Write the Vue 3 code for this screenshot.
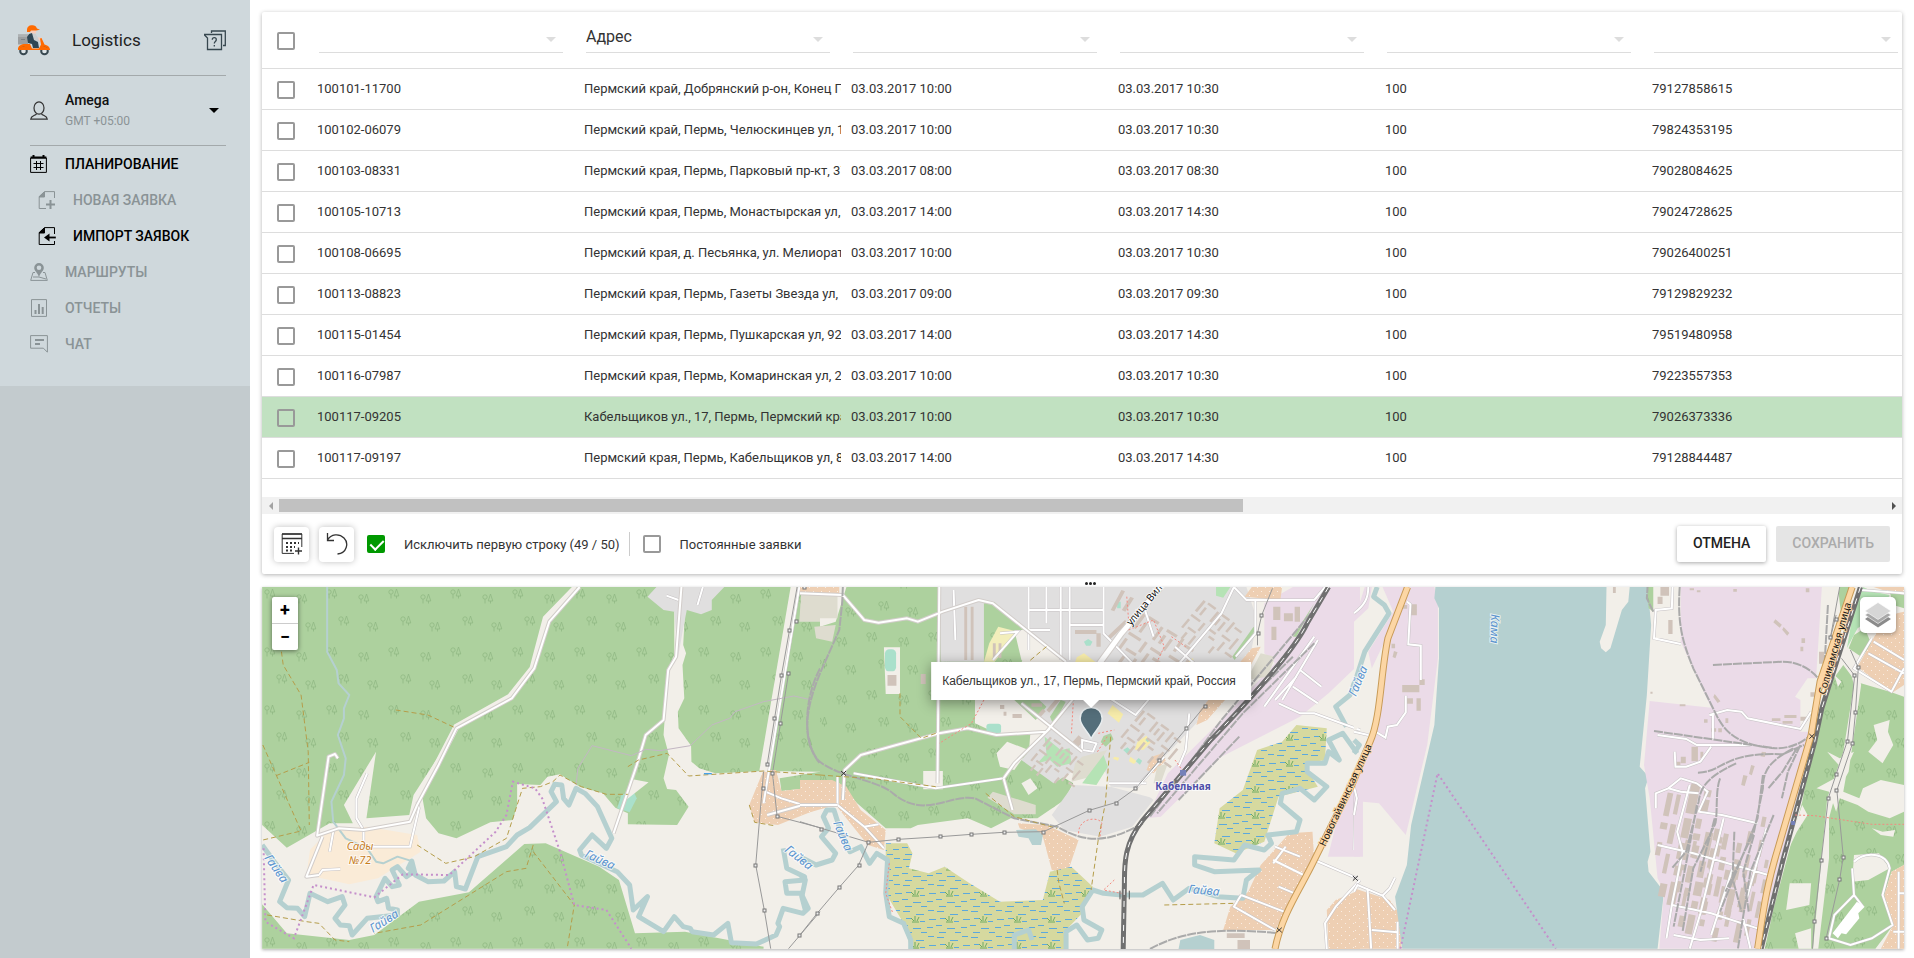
<script setup>
import { ref } from 'vue'

const rows = ref([
  ['100101-11700', 'Пермский край, Добрянский р-он, Конец Гор', '03.03.2017 10:00', '03.03.2017 10:30', '100', '79127858615'],
  ['100102-06079', 'Пермский край, Пермь, Челюскинцев ул, 12', '03.03.2017 10:00', '03.03.2017 10:30', '100', '79824353195'],
  ['100103-08331', 'Пермский края, Пермь, Парковый пр-кт, 37', '03.03.2017 08:00', '03.03.2017 08:30', '100', '79028084625'],
  ['100105-10713', 'Пермский края, Пермь, Монастырская ул, 14', '03.03.2017 14:00', '03.03.2017 14:30', '100', '79024728625'],
  ['100108-06695', 'Пермский края, д. Песьянка, ул. Мелиорат', '03.03.2017 10:00', '03.03.2017 10:30', '100', '79026400251'],
  ['100113-08823', 'Пермский края, Пермь, Газеты Звезда ул,', '03.03.2017 09:00', '03.03.2017 09:30', '100', '79129829232'],
  ['100115-01454', 'Пермский края, Пермь, Пушкарская ул, 92', '03.03.2017 14:00', '03.03.2017 14:30', '100', '79519480958'],
  ['100116-07987', 'Пермский края, Пермь, Комаринская ул, 2', '03.03.2017 10:00', '03.03.2017 10:30', '100', '79223557353'],
  ['100117-09205', 'Кабельщиков ул., 17, Пермь, Пермский кра', '03.03.2017 10:00', '03.03.2017 10:30', '100', '79026373336'],
  ['100117-09197', 'Пермский края, Пермь, Кабельщиков ул, 85', '03.03.2017 14:00', '03.03.2017 14:30', '100', '79128844487']
])
const selected = ref(8)
const skipFirst = ref(true)
const permanent = ref(false)
const columns = ref(['', 'Адрес', '', '', '', ''])

const box = ([x, y, w, h]) => `M${x} ${y}h${w}v${h}h${-w}z`
const eastBlocks = [
  [0, 0, 26, 90], [40, 10, 20, 22], [40, 40, 20, 40], [0, 105, 22, 60], [34, 100, 16, 30], [34, 145, 20, 20],
  [0, 180, 28, 50], [44, 180, 14, 40], [2, 250, 22, 30], [38, 244, 18, 48], [0, 300, 24, 70], [42, 310, 16, 24],
  [-60, 40, 16, 70], [-34, 40, 12, 60], [-62, 130, 20, 20], [-34, 130, 16, 60], [-60, 190, 14, 40],
  [-30, 220, 12, 60], [-28, 310, 20, 40], [90, 120, 18, 36], [118, 130, 14, 48], [90, 180, 16, 60],
  [122, 200, 16, 40], [90, 270, 22, 30], [124, 260, 14, 60], [92, 330, 18, 50], [160, 150, 14, 30],
  [184, 110, 14, 40], [162, 200, 20, 60], [192, 180, 12, 70], [164, 290, 18, 80], [196, 280, 14, 60],
  [214, 60, 12, 30], [220, 130, 12, 50], [218, 210, 12, 60]
].map(box).join('')
const townBlocks = [
  [0, 0, 10, 50], [20, -4, 34, 9], [20, 18, 9, 34], [64, 4, 9, 46], [0, 66, 40, 9], [52, 66, 9, 36], [0, 88, 9, 40],
  [84, 0, 34, 9], [84, 20, 9, 30], [106, 20, 9, 40], [76, 70, 36, 9], [76, 92, 9, 40], [98, 92, 24, 9],
  [132, 0, 9, 46], [150, 10, 30, 9], [132, 60, 36, 9], [150, 80, 9, 40], [132, 116, 9, 30], [180, 40, 9, 50],
  [20, 110, 34, 9], [24, 132, 9, 30], [56, 124, 9, 40], [180, 104, 30, 9]
].map(box).join('')
const masts = [
  [804, 587], [796, 621], [789, 630], [781, 675], [788, 673], [774, 718], [780, 723], [767, 764], [772, 773],
  [763, 788], [777, 816], [755, 865], [764, 910], [799, 935], [817, 913], [821, 829], [868, 842], [898, 839], [940, 836],
  [971, 834], [1004, 832], [1043, 832], [1089, 810], [1116, 803], [1135, 788], [1159, 760], [1186, 728], [1205, 706],
  [1258, 633], [1261, 615], [859, 865], [839, 887], [1830, 637], [1836, 619], [1858, 667], [1854, 675], [1855, 712],
  [1847, 741], [1852, 743], [1836, 774], [1836, 790], [1828, 798], [1821, 860], [1843, 857], [1839, 879], [1814, 921], [1826, 938]
]
const waters = [
  [264, 858, 55, 'Гайва'], [373, 933, -33, 'Гайва'], [584, 857, 24, 'Гайва'], [784, 851, 38, 'Гайва'],
  [833, 823, 67, 'Гайва'], [1188, 893, 5, 'Гайва'], [1356, 697, -68, 'Гайва'], [1491, 614, 91, 'Кама']
]
const lanesWest = 'M290 735V785H420L445 670 440 650M300 565L270 640V700L290 735M205 740L195 800M165 870L175 855 225 852M1520 660L1460 640 1415 620M1520 660H1568M1240 6L1225 60M1138 32L1172 45'
const lanesTown = 'M970 640H865M1330 830L1400 860M1325 870L1410 915M1360 830L1325 880M1235 975L1355 1025M1235 975L1215 1010 1330 1080M1340 950L1385 970M1440 870L1560 925M1568 930L1500 1010 1470 1060 1475 1137M1555 640L1552 840M1340 400L1400 430 1440 430 1568 480M1380 350L1450 400M1400 300L1460 350M1330 390L1390 320M1440 200L1300 410M1450 210L1350 390M640 51V240M730 51V270M690 51V160M755 51V270M640 120H850M640 180H700M755 165H850M560 190L610 185 540 270M430 60L435 210M940 655L1020 560M1090 430L1080 540 1060 590M850 51V190L940 290M860 380L940 435 1180 130 1215 51 1250 90H1440L1470 51M1275 90L1275 190 1220 260M1050 230L1180 350M960 100L990 200M150 610L380 655 570 625M105 620V705L180 770 235 835M180 770L220 763M790 510L830 520 820 545 790 540z'
const lanesEast = 'M0 920L10 900 80 932 100 910 115 878M38 910L48 1091M80 932L115 975M122 1010V1091M50 1035L122 1042M148 50L158 58 152 178 187 182V285M145 332V382L120 420 95 425 88 458 60 440M0 85C30 60 40 40 40 6M0 440L40 450M892 6L890 70 845 75 840 160 915 177M995 390L1045 375 1085 380 1102 400 1250 432 1280 380M1005 385V465M850 450L930 462 960 480 1110 480M845 670V625L880 610 915 580 960 595 990 620 965 680 1030 690 1130 715M880 610L915 620 965 625M898 500L900 545 930 545 970 530 1000 485M850 780L950 805 1160 870M890 960L1000 985 1130 1030M940 600L905 740 920 800 890 960 875 1060M1035 700L970 985 940 1091M1060 850L1000 1050M1155 730L1100 940M895 1050L970 1065 1050 1060M1090 1000L1110 1091M1450 160L1400 250 1505 320 1540 250M1440 205L1540 265M1455 170L1540 225M1420 15L1540 25M1525 860V1091M1510 1040H1541M1400 830C1430 800 1490 800 1500 850L1480 930 1508 1020 1450 1060 1390 1080 1330 1060 1345 990 1400 930 1425 965M1400 930L1395 850M1525 925H1541M0 605L8 640 0 690'
const roadsWest = 'M895 6L810 110 768 250 705 340 550 430 500 540 440 660 420 710 290 735 220 730 160 752 192 515 210 507 218 520M175 755L130 875 165 870M1180 6L1165 215 1143 255 1130 405 1080 450 1055 540 990 745M1420 690L1520 660'
const roadsTown = 'M0 70L120 75 180 150 220 158 300 145 330 155 400 125 500 90 540 100 745 275M120 690L125 600 170 555 270 525 390 490 470 475 550 495 690 485 850 275M620 400L790 545M390 51L385 640M570 625L600 580 700 475M570 625L595 720M0 705H105'
</script>

<template>
  <div class="app">
    <aside class="side">
      <div class="side-top">
        <header class="brand">
          <svg class="scooter" viewBox="0 0 32 31" width="32" height="31" aria-hidden="true">
            <path d="M0 9.500h10v10H0z" fill="#9c9fa1" /><path d="M0 9.500h10V12H0z" fill="#adb1b3" /><path d="M3 14h4v1H3z" fill="#7c8184" />
            <path d="M12 9l5-1 3 5 3 1v3l-5-1-4 2z" fill="#c9ced1" />
            <path d="M20 12l3 1 1-1v3l-3 1z" fill="#f6cdbd" />
            <path d="M12 4h6.500l-.5 4.500h-5z" fill="#f6cdbd" />
            <path d="M9 5C9 .5 13-.5 16 .5c2 .6 2.500 2 3 3l3 1.200-4 .8h-5l-1 1.500H9z" fill="#ff6a00" />
            <path d="M11 9l3-1 2 7 4 2 1 6h-6l-1-4-4-1-1-6z" fill="#2f4654" />
            <path d="M0 25c-.5-4 3-6 7-6h5l2 4.500h7l2-4-1-6 1.500-.5 3 6.500c4 1 5.500 3 5.500 5.500z" fill="#ff6a00" />
            <circle cx="5.500" cy="26" r="4.300" fill="#37474f" /><circle cx="26.500" cy="26" r="4.300" fill="#37474f" />
            <circle cx="5.500" cy="26" r="2.300" fill="#dfe5e8" /><circle cx="26.500" cy="26" r="2.300" fill="#dfe5e8" />
            <path d="M0 25c1-4.500 10-4.500 12 0zM20 25c1-4.500 10-4.500 12 0z" fill="#ff6a00" />
          </svg>
          <span class="brand-name">Logistics</span>
          <button class="plain" type="button" aria-label="Справка">
            <svg viewBox="0 0 22 21" width="22" height="21" fill="none" stroke="#37474f" stroke-width="1.300">
              <path d="M0 4.500h17.500v15H3.500V8L0 4.500M7.500 3V1h13.800v14.500H19" />
              <path d="M8.300 9.800c0-2.800 4-2.800 4 0 0 1.800-2 1.700-2 3.600M10.300 15v1.500" />
            </svg>
          </button>
        </header>
        <button class="user plain" type="button">
          <svg viewBox="0 0 18 19" width="18" height="19" fill="none" stroke="#333" stroke-width="1.200">
            <ellipse cx="9" cy="7" rx="5" ry="6.200" /><path d="M6.500 12.800C5 15 1 14.500.7 18.200h16.600c-.3-3.700-4.300-3.200-5.800-5.400" />
          </svg>
          <span class="user-text"><b>Amega</b><span>GMT +05:00</span></span>
          <span class="caret"></span>
        </button>
        <nav>
          <a href="#plan" class="on">
            <svg viewBox="0 0 18 18" width="18" height="18" fill="none" stroke="currentColor"><path d="M.6 3h15.800v14.400H.6z" /><path d="M.6 2.500h15.800M3.500 0v3M13.500 0v3" stroke-width="2" /><path d="M6.500 6v9M10.500 6v9M3.500 8.500h10M3.500 12.500h10" /></svg>
            ПЛАНИРОВАНИЕ
          </a>
          <a href="#new" class="sub">
            <svg viewBox="0 0 18 18" width="18" height="18" fill="none" stroke="currentColor"><path d="M16.500 7V.600H6.500L1.200 5.500v12H8" /><path d="M6.500 1v5H1z" fill="currentColor" /><path d="M12.500 9v9M8 13.500h9" stroke-width="2" /></svg>
            НОВАЯ ЗАЯВКА
          </a>
          <a href="#import" class="sub on">
            <svg viewBox="0 0 18 18" width="18" height="18" fill="none" stroke="currentColor"><path d="M16.500 7V.600H6.500L1.200 5.500v12h15.300V14" /><path d="M6.500 1v5H1z" fill="currentColor" /><path d="M17.800 10.500H9" stroke-width="1.800" /><path d="M6 10.500l5.500-4v8z" fill="currentColor" stroke="none" /></svg>
            ИМПОРТ ЗАЯВОК
          </a>
          <a href="#routes">
            <svg viewBox="0 0 18 18" width="18" height="18" fill="none" stroke="currentColor"><path d="M5 9.500H3L.7 17.400h16.600L15 9.500h-2M3 14h6l7 2" /><path fill-rule="evenodd" fill="currentColor" stroke="none" d="M9 0a4.800 4.800 0 0 0-4.800 4.800C4.200 8 7.500 9.500 9 14c1.500-4.500 4.800-6 4.800-9.200A4.800 4.800 0 0 0 9 0zm0 2.500a2.300 2.300 0 1 1 0 4.600 2.300 2.300 0 0 1 0-4.600z" /></svg>
            МАРШРУТЫ
          </a>
          <a href="#reports">
            <svg viewBox="0 0 18 18" width="18" height="18" fill="none" stroke="currentColor"><path d="M1.500.6h15v16.800h-15z" /><path d="M5.500 15v-4M9 15V5M12.700 15V8" stroke-width="2" /></svg>
            ОТЧЕТЫ
          </a>
          <a href="#chat">
            <svg viewBox="0 0 18 18" width="18" height="18" fill="none" stroke="currentColor"><path d="M.6.600h16.800v16.600l-4-4H.6z" /><path d="M5 5h9M5 9h5" stroke-width="1.800" /></svg>
            ЧАТ
          </a>
        </nav>
      </div>
    </aside>

    <main>
      <section class="panel">
        <div class="scroller">
          <table>
            <colgroup><col class="c-check" /><col v-for="(c, i) in columns" :key="i" class="c-data" /></colgroup>
            <thead>
              <tr>
                <th><input type="checkbox" aria-label="Выбрать все" /></th>
                <th v-for="(c, i) in columns" :key="i">
                  <div class="pick">
                    <select :aria-label="'Поле столбца ' + (i + 1)"><option>{{ c }}</option></select>
                  </div>
                </th>
              </tr>
            </thead>
            <tbody>
              <tr v-for="(r, i) in rows" :key="r[0]" :class="{ active: i === selected }" @click="selected = i">
                <td><input type="checkbox" :aria-label="'Заявка ' + r[0]" /></td>
                <td v-for="(v, k) in r" :key="k"><div class="cell">{{ v }}</div></td>
              </tr>
            </tbody>
          </table>
        </div>
        <div class="bar" aria-hidden="true"><i class="left"></i><div class="track"><div class="thumb"></div></div><i class="right"></i></div>
        <footer>
          <button class="tool" type="button" aria-label="Добавить в календарь">
            <svg viewBox="0 0 22 22" width="22" height="22" fill="none" stroke="#333"><path d="M13 20.400H1.200V1h19.600v13" /><path d="M1 1h20M1 5.500h20" stroke-width="1.600" /><path d="M5 10h13M5 14h9M5 17.500h8" stroke-width="2" stroke-dasharray="2 2" /><path d="M17.500 14.500v7M14 18h7" stroke-width="1.400" /></svg>
          </button>
          <button class="tool" type="button" aria-label="Отменить действие">
            <svg viewBox="0 0 22 22" width="22" height="22" fill="none" stroke="#333" stroke-width="1.300"><path d="M1.500 0v7.500H8M1.500 7C5 1 13 0 18 5s3 15-6.500 16" /></svg>
          </button>
          <label class="tick"><input v-model="skipFirst" type="checkbox" />Исключить первую строку (49 / 50)</label>
          <label class="tick split"><input v-model="permanent" type="checkbox" />Постоянные заявки</label>
          <button class="btn push" type="button">ОТМЕНА</button>
          <button class="btn" type="button" disabled>СОХРАНИТЬ</button>
        </footer>
      </section>

      <div class="grip"><i></i><i></i><i></i></div>

      <section class="map" aria-label="Карта">
        <svg class="tiles" viewBox="262 587 1642 362" preserveAspectRatio="xMidYMid slice">
          <defs>
            <pattern id="trees" width="62" height="58" patternUnits="userSpaceOnUse" patternTransform="scale(2.8 3)">
              <path d="M0 0h62v58H0z" fill="#add19e" />
              <g fill="none" stroke="#8fb783" stroke-width=".8">
                <g id="tree"><circle cx="7" cy="7" r="2.200" /><path d="M7 9.200v4.300M12.500 4l-2.300 7h4.600zM12.500 11v2.500" /></g>
                <use href="#tree" x="32" y="5" /><use href="#tree" x="12" y="27" /><use href="#tree" x="41" y="33" />
              </g>
            </pattern>
            <pattern id="marsh" width="34" height="26" patternUnits="userSpaceOnUse" patternTransform="scale(2.8 3)">
              <path d="M0 0h34v26H0z" fill="#d6d99f" />
              <path d="M1 3.500h7M14 6.500h8M26 2.500h6M4 10.500h6M18 13.500h5M27 11.500h7M0 17.500h6M11 20.500h8M25 19.500h6M3 24.500h7M19 24.500h6" stroke="#5ba8dd" />
              <path d="M10 14h7M13 13V8M12 13l-3-3M15 13l2-4" stroke="#6dab61" fill="none" />
            </pattern>
            <pattern id="plots" width="8" height="8" patternUnits="userSpaceOnUse" patternTransform="scale(2.8 3)">
              <path d="M0 0h8v8H0z" fill="#eecfb3" /><path d="M1 1h1v1H1zM5 5h1v1H5z" fill="#fbeee3" />
            </pattern>
          </defs>
          <path d="M262 587h1642v362H262z" fill="#f2efe9" />

          <!-- western forest -->
          <g class="geo" transform="translate(260 585) scale(.35714 .33333)">
            <path fill="url(#trees)" d="M6 6H1568V560L1410 558 1275 565 1230 550 1208 530 1207 482 1172 430 1170 380 1188 340 1183 240 1193 205 1185 180 1190 80H1160V210L1143 250 1130 450 1145 510 1130 580 1140 612 1165 615 1200 665 1168 720 1030 718 1030 685 995 668 960 625 895 605 840 568 805 575 785 600 720 597 720 660 708 705 645 712 550 760 500 745 465 700 455 640 550 430 430 630 418 690 298 700 325 500 235 660 260 715 195 715 75 788 6 720z" />
            <path fill="url(#trees)" d="M6 958L75 1045 250 1065 320 1050 445 950 585 922 740 777 800 775 950 845 1005 885 1050 1045 1190 1040 1410 1085V1091H6zM1455 580L1568 560V605L1460 618z" />
            <path fill="#e0dfdf" d="M1085 35L1110 6H1300L1265 45 1265 75 1235 88 1195 75 1185 130 1170 220 1160 80 1130 75z" />
            <path fill="url(#plots)" d="M1410 555L1445 555 1460 618 1568 605V670L1450 720 1385 712 1370 660zM1510 6h58v20h-58z" />
            <path fill="#dedccf" d="M1515 30h53v80h-58z" />
            <path fill="#faebd7" d="M195 735L300 725 440 750 450 800 330 880 250 898 130 870 140 795z" />
            <path fill="#aae0cb" d="M1012 630L1045 617 1055 640 1035 682 1000 670z" />
            <path fill="#f2efe9" d="M1040 582L1088 592 1025 645z" />
            <g class="river">
              <path class="w5" d="M6 780L40 830 80 885 55 950 75 968 105 970 125 995 140 925 190 950 230 935 238 960 210 1000 225 1020 250 1022 258 1050 300 1000 385 990 385 975 360 970 355 940 330 950 325 935 350 880 370 905 390 900 370 855 385 845 410 875 430 860 415 850 425 828 435 870 470 890 515 888 545 860 550 905 575 912 610 815 690 785 720 750 755 728 830 650 815 620 825 598 845 600 850 640 865 660 885 610 910 625 945 665 985 760 970 790 930 750 895 795 900 810 1000 860 1035 900 1045 975 1085 935 1060 995 1130 1040 1160 995 1185 1025 1205 1030 1210 1040 1270 1050 1310 1015 1320 1073 1390 1077 1445 1050 1455 1025 1450 1015 1465 970 1520 985 1535 970 1515 925 1475 925 1470 890 1525 885 1525 875 1475 850 1465 790" />
              <path class="w2" d="M188 6V200L215 255 220 295 250 330 235 370 235 400 218 450 240 520 235 570 200 650 205 710 240 760 300 790 325 830 345 835 385 815 430 830" />
            </g>
            <path class="flank" d="M885 6L800 100 763 250 700 335 550 425 497 535 437 650" /><path class="flank wide" d="M1500 6L1412 560" />
            <path class="lane-edge" :d="lanesWest" /><path class="lane" :d="lanesWest" />
            <path class="road-edge" :d="roadsWest" /><path class="road" :d="roadsWest" />
            <path class="lane-edge" d="M1510 6L1410 655" /><path class="lane" d="M1510 6L1410 655" />
            <path class="line" stroke="#c3b7c3" d="M885 600L890 550 930 482 1040 512 1080 493 1120 497 1205 482 1265 420 1315 400 1330 380 1410 350 1495 333 1545 345" />
            <path class="rail" d="M1568 250C1520 350 1520 480 1568 535" />
            <path class="foot" d="M60 200L65 240 115 330 135 500 138 720M8 480L115 738 8 765M45 572L138 532M380 375L470 390 550 430M440 780L520 835 600 815 690 760 735 610 785 605 820 590 840 570 900 605 970 628H1030M1030 545L1060 525 1140 505 1200 573 1410 558 1568 570M765 780L745 850 690 860 585 930 450 1020 320 1045M765 800L880 960 860 1091M20 990L130 1010 165 1015 210 1065 250 1070M1370 660L1385 712 1440 722" />
            <path class="bound" d="M10 790L15 1010 95 1060 150 900 320 937 400 868 530 870 660 740 690 690 708 590 770 610 790 640 840 800 880 960 970 975 1040 1091" />
            <path class="power" d="M1410 560L1388 840 1412 975 1430 1091M1435 565L1448 694 1568 728M1480 1091L1568 980M1504 6L1460 272 1420 540M1480 265L1435 565" />
            <path d="M1243 564h22v4h-22z" fill="#45a1e8" />
          </g>

          <!-- town, rail yard and marshes -->
          <g class="geo" transform="translate(800 570) scale(.35714 .33333)">
            <path fill="url(#trees)" d="M56 170L100 155 130 51H465L470 90 545 95 630 180 625 265 600 330 490 390 490 460 550 490 645 490 640 560 765 640 740 690 665 745 590 745 535 775 470 745 330 765 310 775H240L160 700 110 640 56 630z" />
            <path fill="#dedccf" d="M10 75h95v70H0zM40 170l60-5-10 50-45-10z" />
            <path fill="#e0dfdf" d="M390 51H1250L1280 150 1265 235 1180 400 1110 460 1020 560 940 655 870 650 850 590 770 600 710 640 620 570 700 470 620 400 700 300 625 180 545 95 515 100 515 275H395zM705 735L765 645 950 655 990 690 930 770 840 800 740 780z" />
            <path fill="#f2efe9" d="M600 180L630 180 745 275 680 310 620 270zM550 550L580 515 640 540 600 600 560 590zM490 390L620 400 690 470 640 495 560 490 495 450zM235 232h45v140h-40zM345 603h55v55h-55zM620 640l25-15 20 30-25 20zM870 650l70 5 90-100 100-110-110 150-30 90z" />
            <path fill="#ebdbe8" d="M1300 100L1380 51H1568V280L1480 370 1400 440 1180 560 1010 740 970 745 1030 610 1180 450 1330 280 1300 250zM1530 640H1568V860H1478z" />
            <path fill="url(#plots)" d="M0 630H90L130 650 170 720 240 780 235 840 190 825 100 705 0 735zM610 760L690 765 780 810 750 905 705 900 680 800 615 775zM1290 885L1370 790 1435 785 1440 870 1330 1080H1185L1205 1010 1255 965zM1480 1137L1475 1020 1500 990 1568 960V1137zM1245 80L1265 51H1350L1345 90zM1265 235L1290 230 1240 330 1140 450 1110 465 1120 420zM0 51H110V70H0zM985 560l30-10 10 20-35 40-20-10z" />
            <path fill="#dedccf" d="M790 560L860 540 815 620 760 635 770 580zM1000 590l30-10-20 60-20 0zM540 665l120 40v28l-60 0-75-50zM1290 250l40 10-20 60-60 10z" />
            <path fill="#f2eebb" d="M555 170L610 185 545 275H515L530 220z" />
            <path fill="#f7ecaa" d="M875 405l30 28-12 25-32-28zM945 515l25-18 12 20-20 22-25 0zM775 262l20-12 35 28h-60zM925 560l18 14-8 8-14-8zM880 560l14 3-4 9-14-6zM1085 270l16-5 0 12-14 0z" />
            <path fill="#b5e3b5" d="M685 500L730 540 755 535 760 580 720 590 700 570 665 580 690 550zM790 640L850 555 862 590 830 645zM1165 51h40l-20 32-20-6z" />
            <path fill="#aed1a0" d="M850 498l20-8 8 18-22 22-14-14zM1210 260l60-90 5 10-58 90zM1440 100l-50 100-10 0zM700 440l30-50 14 5-34 70zM600 390l60 60 30-40-20-20z" />
            <g fill="#aae0cb"><rect x="238" y="238" width="31" height="66" rx="12" /><rect x="522" y="461" width="41" height="30" rx="8" /><path d="M905 540l12-8 12 12-10 10zM940 574l8-10 10 8-6 12zM795 215l12-8 12 8-6 12h-12zM888 95h10v20h-10zM967 510l6-7 7 7-6 7z" /></g>
            <path fill="#b5d0d0" d="M605 780L660 778 680 795 675 825 650 825 640 805 612 800zM1065 1110L1120 1095 1160 1110V1137H1060z" />
            <path fill="url(#marsh)" d="M240 820L300 820 315 850 305 895 360 910 405 890 475 940 560 995 680 990 700 905 760 890 820 950 790 1030 745 1080V1137H310L290 1060 240 970z" />
            <path fill="url(#marsh)" d="M1280 540L1350 515 1390 465 1475 475 1470 570 1420 580 1420 600 1450 650 1340 680 1300 815 1220 850 1160 820 1175 715 1240 660z" />
            <g class="river">
              <path class="w5" d="M0 860L45 885 90 870 100 850 60 800 80 775 65 740 75 720 95 720 110 770 140 845 170 830 195 880 215 850 245 870 240 970 250 1040 290 1060 310 1110V1137M0 920L15 930 5 980 15 1020" />
              <path class="w5" d="M745 1137V1085L775 1065 805 1110 835 1105 845 1080 795 1050 790 1010 820 960 850 970 900 975 960 975 1015 940 1045 990 1090 955 1170 980 1240 985 1250 930 1285 900 1160 905 1105 885V860L1215 870 1245 825 1300 840 1320 820 1310 795 1390 785 1400 750 1345 700 1350 670 1400 655 1440 690 1475 650 1420 605V580L1470 580 1480 545 1510 570 1480 510 1520 490 1560 550" />
              <path class="w5" d="M1530 470L1500 410 1540 375 1568 290M600 1137V1095L640 1080 650 1110" />
            </g>
            <g fill="#d0c3ba">
              <path :d="townBlocks" transform="translate(960 130) rotate(34)" />
              <path :d="townBlocks" transform="translate(1130 90) rotate(38) scale(.8)" />
              <path :d="townBlocks" transform="translate(700 500) rotate(38) scale(.7)" />
              <path :d="townBlocks" transform="translate(960 420) rotate(38) scale(.8)" />
              <path d="M900 60l10 4-30 60-10-4zM925 80l10 5-24 40-10-5zM860 200l50-50 8 8-50 50zM690 420l40-50 8 8-40 50zM660 440l20-24 8 8-20 24zM760 520l20-24 16 14-22 26z" />
              <path d="M245 315h25v32h-25zM338 312h14v30h-14zM595 432h26v12h-26zM770 180h60v12h-60zM830 190h12v40h-12zM1325 110h20v40h-20zM1355 130h25v24h-25zM1385 110h15v45h-15zM1320 170h14v40h-14zM540 220h8v44h-8zM556 220h8v44h-8zM460 110h8v160h-8zM478 110h8v160h-8zM648 400h30v10h-30zM560 405h12v12h-12zM570 425h8v12h-8zM1195 1090h50v14h-50zM1225 1110h35v27h-35z" />
            </g>
            <path class="lane-edge" :d="lanesTown" /><path class="lane" :d="lanesTown" />
            <path class="road-edge" :d="roadsTown" /><path class="road" :d="roadsTown" />
            <path class="road-edge w7" d="M825 300L900 190 1010 51" /><path class="road w5" d="M825 300L900 190 1010 51" />
            <path class="rail" d="M120 51L118 100 110 180 60 300C20 400 0 500 50 570 100 620 220 630 260 670 350 750 420 670 490 685L600 745 720 770C800 820 860 820 960 760M980 1137C1060 1090 1150 1070 1345 1090M1430 130L1180 450 980 740M1440 220L1240 430 1000 730M1380 260L1200 450M1230 500L1060 690" />
            <path class="main-rail" d="M1480 51L1420 160C1380 250 1240 410 1150 510L960 750C900 830 910 900 908 960L905 1137" /><path class="main-dash" d="M1480 51L1420 160C1380 250 1240 410 1150 510L960 750C900 830 910 900 908 960L905 1137" />
            <path d="M896 962v26M922 962v26" class="line" stroke="#555" />
            <path class="foot" d="M56 615L120 620 200 625 380 650M280 370V440L340 505 380 490M870 500L855 700 835 810M835 810L815 960M1020 1005L1215 1000M690 230L640 275M520 670L600 740 720 775M720 900L725 940 740 1000" />
            <path class="walk" d="M515 390L480 460 390 520M765 400L760 490M860 500L830 550M835 490L880 480M780 790C780 740 840 740 845 760L840 800M880 930L850 960 900 970M920 180L990 150 1020 230 1000 275M250 880L240 970 260 1030M1040 200L1080 230M915 80L920 150M1050 570L1070 600" />
            <path class="power" d="M0 755L60 775 192 817 276 808 393 800 480 793 570 787 682 785 810 721 886 697 940 655 1006 572 1082 475 1135 406M1281 226L1281 190 1293 135 1323 55M192 817L164 886 110 952 48 1030 0 1095" />
            <path class="trunk-edge" d="M1575 580L1440 870C1400 960 1350 1030 1330 1137" /><path class="trunk" d="M1575 580L1440 870C1400 960 1350 1030 1330 1137" />
            <path class="line" stroke="#333" d="M115 603l14 14m0-14l-14 14M1335 1073l14 14m0-14l-14 14M1548 918l14 14m0-14l-14 14" />
            <path d="M1064 600h17v17h-17z" fill="#7581b9" />
          </g>

          <!-- river and eastern bank -->
          <g class="geo" transform="translate(1354 585) scale(.35714 .33333)">
            <path fill="#ebdbe8" d="M0 110L30 6H225L235 60V220L205 480 145 750 70 655 25 650V815H0V600L60 430 90 160 50 250 0 300z" />
            <path fill="#f2efe9" d="M0 110L40 70 50 6H80L110 80 40 200 60 300 20 420 0 440z" />
            <path fill="url(#plots)" d="M0 910L100 945 130 990 133 1091H0z" />
            <path fill="#b5d0d0" d="M228 6H707L705 120 688 170 692 190 705 202 718 190 750 75 768 50 772 6H822L832 120 820 330 800 545 825 575 815 610 830 800 822 830 825 860 868 920 850 1091H135L115 935 148 840 160 720 225 420 238 220 238 70 225 40z" />
            <path fill="#ebdbe8" d="M915 6H1340L1315 280 1270 280 1235 335 1250 345 1250 440 1290 440 1240 640 1130 1091H855L868 920 850 880 828 640 812 540 828 348 1000 368 915 170z" />
            <path fill="url(#trees)" d="M1370 240L1405 290 1505 322 1540 335V840L1505 860 1485 930 1510 1020 1460 1091H1150L1175 970 1255 650 1310 330zM820 6H838V80L825 70zM1355 6H1390L1365 100z" />
            <path fill="#b5e3b5" d="M1425 6L1455 20 1500 30 1470 90 1410 130 1380 190 1395 100z" />
            <path fill="#add19e" d="M1400 150L1430 130 1450 180 1420 215 1385 190zM1500 20L1541 30V70L1510 60z" />
            <path fill="url(#plots)" d="M1455 6H1540V20L1480 15zM1410 245L1470 130 1520 85 1540 80V300L1505 325zM1540 840L1505 860 1485 930 1510 1020 1475 1091H1540z" />
            <path fill="#f2efe9" d="M1455 420L1500 405 1495 440 1510 480 1480 535 1440 500 1465 465zM1295 610L1380 560 1370 620 1415 640 1425 610 1475 585 1540 600V680L1500 700 1440 680 1410 660 1360 640 1350 680 1330 620zM1220 895H1280L1275 960 1210 975zM1235 1045L1280 1030V1091H1245zM1450 730L1480 740 1515 735 1510 755 1475 750zM1400 810L1470 805 1500 850 1440 885 1395 890zM1325 500L1360 520 1400 500 1375 560 1340 520zM1255 660L1270 690 1240 740 1200 830zM1375 200L1410 240 1420 300 1385 560 1345 640 1330 700 1330 820 1300 1091H1285L1325 640 1370 500 1400 300zM1345 270L1365 290 1355 305zM1310 6H1360L1300 430H1285z" />
            <g fill="#d0c3ba">
              <path :d="eastBlocks" transform="translate(945 595) rotate(11)" />
              <path :d="eastBlocks" transform="translate(985 740) rotate(11) scale(.84)" />
              <path d="M135 300h48v22h-48zM183 283h15v17h-15zM148 340h17v16h-17zM175 340h12v37h-12zM160 58h16v33h-16zM133 60h16v11h-16zM105 176h10v14h-10zM112 198l10 4-6 18-8-4zM858 6h24v26h-24zM850 35h14v22h-14zM880 105h12v42h-12zM1180 103l18 16-6 9-18-16zM1203 126l16 18-6 8-14-18zM1010 327l16 22-8 5-12-18zM1302 200h14v36h-14zM1278 322h12v13h-12zM1170 400h24v8h-24zM1205 390h34v9h-34zM1200 408h28v8h-28zM1250 395h20v12h-20zM945 485h18v44h-18zM915 515h14v20h-14zM970 500h8v20h-8zM900 530h14v10h-14zM1090 570l12 3-8 30-10-3zM1112 540l10 3-8 28-8-4zM1142 500l12 2-4 14-12-2zM1000 430h14v10h-14zM1040 400h8v14h-8zM980 403h10v10h-10zM1020 430h10v12h-10zM725 6h8v18h-8zM830 320h6v6h-6zM912 358h16v6h-16zM940 10h12v6h-12zM960 16h10v6h-10zM1062 12h10v8h-10zM1265 10h10v12h-10zM1253 160h10v14h-10zM1250 185h8v14h-8z" />
            </g>
            <path class="lane-edge" :d="lanesEast" /><path class="lane" :d="lanesEast" />
            <path class="rail" d="M912 6C905 120 920 170 950 250L1010 380C1040 450 1080 480 1180 490 1240 490 1270 460 1300 430M840 438L1180 490M1005 240L1200 230C1250 230 1290 260 1305 290M1327 60L1318 230M963 563C1040 560 1030 500 1200 508L1260 480M1070 535C1000 570 970 600 965 650L930 800 890 850M1025 580C1010 620 1020 700 1010 720L950 850 920 1040M960 660L940 780 895 1025M1230 490C1160 530 1145 560 1145 610L1120 740 1040 920M1240 490L1200 560 1160 610M1250 480L1215 560 1198 640M1175 690L1110 860 1075 1091M1065 740L1060 880 1085 980M1145 570L1130 700 1025 980M1010 700L970 860M1120 750L1090 860 1105 980M838 80L820 40 822 6" />
            <path class="main-rail" d="M1418 6L1310 370 1290 470 1200 830 1140 1091" /><path class="main-dash" d="M1418 6L1310 370 1290 470 1200 830 1140 1091" />
            <path class="trunk-edge" d="M150 6L95 160C75 260 75 400 45 470L-10 610M1395 6L1305 290 1280 450 1190 780C1150 920 1145 990 1130 1091" /><path class="trunk" d="M150 6L95 160C75 260 75 400 45 470L-10 610M1395 6L1305 290 1280 450 1190 780C1150 920 1145 990 1130 1091" />
            <g class="river"><path class="w5" d="M65 6L55 35 85 60 98 85 30 200 0 300M0 465L15 480 0 505" /></g>
            <path class="power" d="M1360 6L1334 158M1365 220L1402 272 1382 466 1350 568 1328 640 1308 827 1289 1010 1284 1091M1390 195L1412 248 1404 383 1396 475 1352 616 1370 815 1360 883 1322 1060M1350 90L1334 158" />
            <path class="walk" d="M1235 690L1290 692 1450 718 1540 718" />
            <path class="bound" d="M130 1091L234 565 565 1091" />
            <path class="line" stroke="#333" d="M1275 447l14 14m0-14l-14 14" />
            <path d="M1224 708h11v12h-11z" fill="#7581b9" />
            <path d="M1340 1045L1408 950 1430 965 1412 985 1415 1000 1378 1048 1365 1045 1355 1060z" fill="#fff" />
          </g>

          <g fill="#eee" stroke="#777"><rect v-for="(m, i) in masts" :key="i" :x="m[0] - 1" :y="m[1] - 1" width="3" height="3" /></g>

          <g class="lbl water"><text v-for="(w, i) in waters" :key="i" :transform="`translate(${w[0]} ${w[1]}) rotate(${w[2]})`">{{ w[3] }}</text></g>
          <g class="lbl garden" text-anchor="middle"><text x="360" y="850">Сады</text><text x="360" y="864">№72</text></g>
          <text class="lbl station" x="1183" y="790" text-anchor="middle">Кабельная</text>
          <text class="lbl street" transform="translate(1131 626) rotate(-50)">улица Виле</text>
          <g class="lbl trunk-name">
            <text transform="translate(1325 847) rotate(-65)">Новогайвинская улица</text>
            <text transform="translate(1825 695) rotate(-74)">Соликамская улица</text>
          </g>
        </svg>

        <div class="zoom"><button type="button" aria-label="Приблизить">+</button><button type="button" aria-label="Отдалить">−</button></div>
        <button class="layers" type="button" aria-label="Слои">
          <svg viewBox="0 0 26 26" width="26" height="26"><path d="M0 17l13 8.500L26 17l-3-2H3z" fill="#8b8b8b" /><path d="M0 13l13 8.500L26 13l-3-2H3z" fill="#a8a8a8" stroke="#fff" stroke-width=".6" /><path d="M0 9L13 .5 26 9l-13 8.500z" fill="#d6d6d6" stroke="#fff" stroke-width=".6" /></svg>
        </button>
        <div class="pin">
          <div class="popup">Кабельщиков ул., 17, Пермь, Пермский край, Россия</div>
          <svg viewBox="0 0 24 34" width="24" height="34" aria-hidden="true"><path d="M12 1.500C5.500 1.500 1 6 1 12.500 1 20 8 24 12 32.500 16 24 23 20 23 12.500 23 6 18.500 1.500 12 1.500z" fill="#546e7a" stroke="#e8edef" stroke-width="1.500" /></svg>
        </div>
      </section>
    </main>
  </div>
</template>

<style>
body { margin: 0; background: #fff; }
</style>

<style scoped>
.app { display: flex; min-height: 100vh; font-family: Roboto, "Noto Sans", sans-serif; font-size: 13px; color: #333; }
.app * { box-sizing: border-box; }
button, select { font: inherit; color: inherit; }
.plain { padding: 0; border: 0; background: none; display: flex; }

.side { flex: 0 0 250px; background: #c3cbce; }
.side-top { background: #cfd8dc; padding-bottom: 24px; }
.brand { display: flex; align-items: center; height: 75px; padding: 6px 24px 0 18px; }
.brand-name { flex: 1; padding: 0 0 2px 22px; font-size: 17px; color: #212121; }
.user { align-items: center; width: 196px; height: 71px; margin-left: 30px; border-top: 1px solid #a3a9ab; border-bottom: 1px solid #a3a9ab; text-align: left; }
.user-text { display: flex; flex: 1; flex-direction: column; gap: 5px; padding-left: 17px; line-height: 16px; }
.user-text b { font-size: 14px; font-weight: 500; color: #111; }
.user-text span { font-size: 12px; color: #8b9396; }
.caret { margin-right: 7px; border: 5px solid transparent; border-top-color: #000; border-bottom: 0; }
nav a { display: flex; align-items: center; gap: 17px; height: 36px; padding-left: 30px; font-size: 14px; font-weight: 500; color: #8a9396; text-decoration: none; }
nav .sub { padding-left: 38px; }
nav .on { color: #000; }

main { flex: 1; min-width: 0; display: flex; flex-direction: column; padding: 12px 10px 9px 12px; }
.panel { margin-right: 2px; border-radius: 2px; background: #fff; box-shadow: 0 1px 4px rgba(0, 0, 0, .3); }
.scroller { overflow: hidden; padding-bottom: 18px; }
table { width: 1657px; table-layout: fixed; border-collapse: separate; border-spacing: 0; }
.c-check { width: 55px; }
.c-data { width: 267px; }
th, td { padding: 0; border-bottom: 1px solid #ddd; text-align: left; font-weight: 400; }
th { height: 57px; vertical-align: top; }
td { height: 41px; }
th:first-child { padding-top: 20px; }
th:first-child, td:first-child { padding-left: 15px; }
td:first-child { padding-top: 2px; }
.active { background: #c1e1c1; }
.cell { width: 257px; overflow: hidden; white-space: nowrap; line-height: 20px; padding-bottom: 1px; }
input[type="checkbox"] { appearance: none; display: block; flex: none; width: 18px; height: 18px; margin: 0; border: 2px solid #999; border-radius: 2px; }
input[type="checkbox"]:checked { border-color: #090; background: #090; position: relative; }
input[type="checkbox"]:checked::after { content: ""; position: absolute; left: 4px; top: 0; width: 6px; height: 11px; border: solid #fff; border-width: 0 2px 2px 0; transform: rotate(45deg); }
.pick { position: relative; width: 244px; margin: 9px 0 0 2px; border-bottom: 1px solid #ddd; }
.pick select { appearance: none; display: block; width: 100%; height: 31px; padding: 0 20px 1px 0; border: 0; background: none; font-size: 16px; }
.pick::after { content: ""; position: absolute; right: 7px; top: 16px; border: 5px solid transparent; border-top-color: #ddd; border-bottom: 0; }

.bar { display: flex; align-items: center; height: 17px; background: #f1f1f1; }
.bar i { flex: 0 0 17px; height: 8px; display: flex; justify-content: center; }
.bar i::before { content: ""; border: 4px solid transparent; }
.bar .left::before { border-right-color: #a3a3a3; border-left: 0; }
.bar .right::before { border-left-color: #505050; border-right: 0; }
.track { flex: 1; }
.thumb { width: 60%; height: 13px; background: #c1c1c1; }

footer { display: flex; align-items: center; gap: 10px; height: 60px; padding: 0 12px; }
.tool { display: flex; align-items: center; justify-content: center; width: 35px; height: 35px; padding: 0; border: 0; border-radius: 4px; background: #fff; box-shadow: 0 0 6px rgba(0, 0, 0, .25); }
.tick { display: flex; align-items: center; gap: 19px; margin-left: 3px; height: 24px; }
.split { margin-left: -1px; padding-left: 13px; border-left: 1px solid #ccc; }
.btn { height: 36px; padding: 0 16px 2px; border: 0; border-radius: 2px; background: #fff; font-size: 14px; font-weight: 500; color: #222; box-shadow: 0 1px 4px rgba(0, 0, 0, .35); }
.btn:disabled { background: #e5e5e5; color: #ababab; box-shadow: none; }
.push { margin-left: auto; }

.grip { display: flex; justify-content: center; align-items: center; gap: 1px; height: 13px; padding: 5px 0 0 15px; }
.grip i { width: 3px; height: 3px; border-radius: 50%; background: #222; }

.map { position: relative; flex: 1; min-height: 300px; overflow: hidden; box-shadow: 0 1px 3px rgba(0, 0, 0, .3); }
.tiles { position: absolute; inset: 0; width: 100%; height: 100%; }
.geo path { vector-effect: non-scaling-stroke; }
.river path { fill: none; stroke: #b5d0d0; stroke-linejoin: round; }
.river .w5 { stroke-width: 5px; }
.river .w2 { stroke-width: 2px; }
.flank { fill: none; stroke: #f2efe9; stroke-width: 6px; }
.flank.wide { stroke-width: 10px; }
.lane-edge { fill: none; stroke: #c6c2c4; stroke-width: 3px; }
.lane { fill: none; stroke: #fff; stroke-width: 2px; }
.road-edge { fill: none; stroke: #d2cdca; stroke-width: 4px; stroke-linejoin: round; }
.road { fill: none; stroke: #fff; stroke-width: 2px; stroke-linejoin: round; }
.road-edge.w7 { stroke-width: 7px; }
.road.w5 { stroke-width: 5px; }
.line { fill: none; stroke-width: 1px; }
.rail { fill: none; stroke: #aaa; stroke-width: 2px; stroke-dasharray: 9px 1px; }
.main-rail { fill: none; stroke: #707070; stroke-width: 5px; }
.main-dash { fill: none; stroke: #fff; stroke-width: 1px; stroke-dasharray: 6px 6px; }
.trunk-edge { fill: none; stroke: #c89b57; stroke-width: 7px; }
.trunk { fill: none; stroke: #fcd6a4; stroke-width: 5px; }
.foot { fill: none; stroke: #b59d4a; stroke-width: 1px; stroke-dasharray: 5px 3px; }
.walk { fill: none; stroke: #f48a80; stroke-width: 1px; stroke-dasharray: 2px 2px; }
.bound { fill: none; stroke: #c58fcb; stroke-width: 2px; stroke-dasharray: 2px 3px; }
.power { fill: none; stroke: #999; stroke-width: 1px; }
.lbl { font-family: "Noto Sans", sans-serif; font-size: 11px; paint-order: stroke; stroke: rgba(255, 255, 255, .7); stroke-width: 2px; }
.water { fill: #5b94cf; font-size: 12px; font-style: italic; }
.garden { fill: #c77d1e; font-style: italic; }
.station { fill: #4f4fa8; font-size: 10px; font-weight: 700; }
.street { fill: #111; font-size: 10px; }
.trunk-name { fill: #111; font-size: 10px; stroke: #fcd6a4; }

.zoom { position: absolute; left: 10px; top: 10px; width: 26px; border-radius: 2px; background: #fff; box-shadow: 0 1px 5px rgba(0, 0, 0, .5); }
.zoom button { display: block; width: 26px; height: 26px; padding: 0; border: 0; background: none; font-size: 18px; font-weight: 700; line-height: 26px; color: #000; }
.zoom button + button { height: 27px; border-top: 1px solid #ccc; }
.layers { position: absolute; right: 8px; top: 10px; display: flex; align-items: center; justify-content: center; width: 36px; height: 36px; padding: 0; border: 0; border-radius: 5px; background: #fff; box-shadow: 0 1px 5px rgba(0, 0, 0, .4); }
.pin { position: absolute; left: calc(50% + 8px); top: 75px; display: flex; flex-direction: column; align-items: center; gap: 6px; transform: translateX(-50%); }
.popup { position: relative; padding: 0 15px 0 11px; height: 38px; line-height: 38px; background: #fff; white-space: nowrap; font-family: "Liberation Sans", Arial, sans-serif; font-size: 12px; box-shadow: 0 3px 14px rgba(0, 0, 0, .4); }
.popup::after { content: ""; position: absolute; left: 50%; top: 100%; margin-left: -8px; border: 8px solid transparent; border-top-color: #fff; border-bottom: 0; }
</style>
